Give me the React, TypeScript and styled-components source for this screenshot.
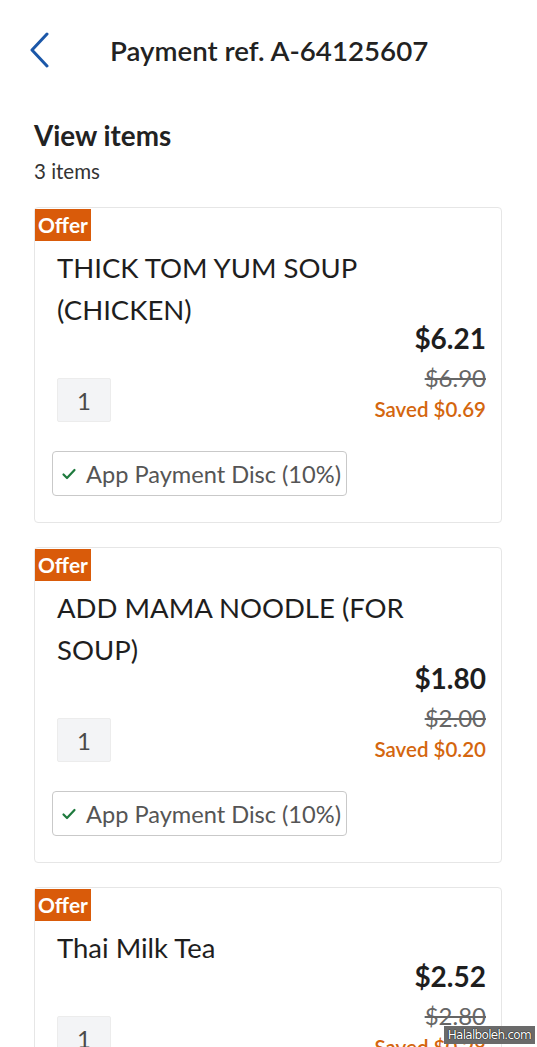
import React, { FC } from 'react'
import styled, { createGlobalStyle } from 'styled-components'

const GlobalStyle = createGlobalStyle`
    html, body {
        margin: 0;
        padding: 0;
        background: #ffffff;
        font-family: Lato, "Open Sans", sans-serif;
        color: #222222;
    }
`

const Page = styled.div`
    width: 537px;
    height: 1047px;
    overflow: hidden;
    position: relative;
    background: #ffffff;
`

const Header = styled.header`
    display: flex;
    align-items: center;
    height: 100px;
    padding-left: 28px;
    box-sizing: border-box;
`

const BackButton = styled.button`
    display: flex;
    align-items: center;
    justify-content: center;
    width: 24px;
    height: 40px;
    padding: 0;
    border: none;
    background: none;
    color: #1b57a8;
`

const Title = styled.h1`
    margin: 0 0 0 58px;
    font-size: 27.7px;
    font-weight: 600;
    color: #222222;
`

const Section = styled.section`
    padding: 19px 34px 0;
`

const SectionTitle = styled.h2`
    margin: 0;
    font-size: 27.8px;
    font-weight: 700;
    line-height: 34px;
    color: #222222;
`

const Count = styled.div`
    margin-top: 6px;
    font-size: 20.5px;
    line-height: 24px;
    color: #333333;
`

const List = styled.div`
    display: flex;
    flex-direction: column;
    gap: 24px;
    margin-top: 24px;
    margin-right: 1px;
`

const Card = styled.div`
    position: relative;
    height: 316px;
    box-sizing: border-box;
    border: 1px solid #e6e6e6;
    border-radius: 4px;
    padding: 39px 15px 0 22px;
`

const Badge = styled.span`
    position: absolute;
    top: 1px;
    left: 0;
    padding: 0 3px;
    height: 32px;
    line-height: 32px;
    background: #d95b0a;
    color: #ffffff;
    font-size: 21px;
    font-weight: 700;
`

const Name = styled.div`
    font-size: 27.5px;
    line-height: 42px;
    color: #1e1e1e;
    width: 360px;
`

const Row = styled.div`
    display: flex;
    justify-content: space-between;
    align-items: flex-end;
    margin-top: -11px;
`

const Qty = styled.div`
    display: flex;
    align-items: center;
    justify-content: center;
    width: 54px;
    height: 44px;
    background: #f3f4f6;
    border: 1px solid #ececec;
    box-sizing: border-box;
    border-radius: 2px;
    font-size: 24px;
    color: #4a4a4a;
`

const Prices = styled.div`
    display: flex;
    flex-direction: column;
    align-items: flex-end;
`

const Price = styled.div`
    font-size: 28px;
    font-weight: 700;
    line-height: 36px;
    color: #1e1e1e;
`

const OldPrice = styled.div`
    margin-top: 7px;
    font-size: 24px;
    line-height: 30px;
    color: #666666;
    text-decoration: line-through;
`

const Saved = styled.div`
    margin-top: 3px;
    font-size: 20.5px;
    font-weight: 600;
    line-height: 26px;
    color: #d4660e;
`

const Promo = styled.div`
    display: inline-flex;
    align-items: center;
    gap: 9px;
    margin: 29px 0 0 -5px;
    height: 45px;
    padding: 0 5px 0 8px;
    box-sizing: border-box;
    border: 1px solid #c9c9c9;
    border-radius: 4px;
    font-size: 23.6px;
    color: #555555;
`

const Check = styled.svg`
    width: 16px;
    height: 16px;
    color: #1f7a3e;
`

const Watermark = styled.div`
    position: absolute;
    right: 2px;
    bottom: 3px;
    padding: 2px 4px;
    background: #6a6a6a;
    color: #ffffff;
    font-family: "DejaVu Sans", sans-serif;
    font-size: 12px;
    letter-spacing: -0.7px;
    text-shadow: 0 0 1px #000, 0 0 1px #000;
`

type Item = {
    name: string
    price: string
    old: string
    saved: string
    qty: number
}

const items: Item[] = [
    { name: 'THICK TOM YUM SOUP (CHICKEN)', price: '$6.21', old: '$6.90', saved: 'Saved $0.69', qty: 1 },
    { name: 'ADD MAMA NOODLE (FOR SOUP)', price: '$1.80', old: '$2.00', saved: 'Saved $0.20', qty: 1 },
    { name: 'Thai Milk Tea', price: '$2.52', old: '$2.80', saved: 'Saved $0.28', qty: 1 },
]

const ItemCard: FC<{ item: Item }> = ({ item }) => (
    <Card>
        <Badge>Offer</Badge>
        <Name>{item.name}</Name>
        <Row>
            <Qty>{item.qty}</Qty>
            <Prices>
                <Price>{item.price}</Price>
                <OldPrice>{item.old}</OldPrice>
                <Saved>{item.saved}</Saved>
            </Prices>
        </Row>
        <Promo>
            <Check viewBox="0 0 16 16" fill="none">
                <path d="M2.5 8.5l3.5 3.5 7.5-8" stroke="currentColor" strokeWidth="2.2" strokeLinecap="round" strokeLinejoin="round" />
            </Check>
            App Payment Disc (10%)
        </Promo>
    </Card>
)

const App: FC = () => (
    <Page>
        <GlobalStyle />
        <Header>
            <BackButton aria-label="Back">
                <svg width="22" height="36" viewBox="0 0 22 36" fill="none">
                    <path d="M18 2L3 18l15 16" stroke="currentColor" strokeWidth="3" strokeLinecap="round" strokeLinejoin="round" />
                </svg>
            </BackButton>
            <Title>Payment ref. A-64125607</Title>
        </Header>
        <Section>
            <SectionTitle>View items</SectionTitle>
            <Count>3 items</Count>
            <List>
                {items.map((item) => (
                    <ItemCard key={item.name} item={item} />
                ))}
            </List>
        </Section>
        <Watermark>Halalboleh.com</Watermark>
    </Page>
)

export default App
